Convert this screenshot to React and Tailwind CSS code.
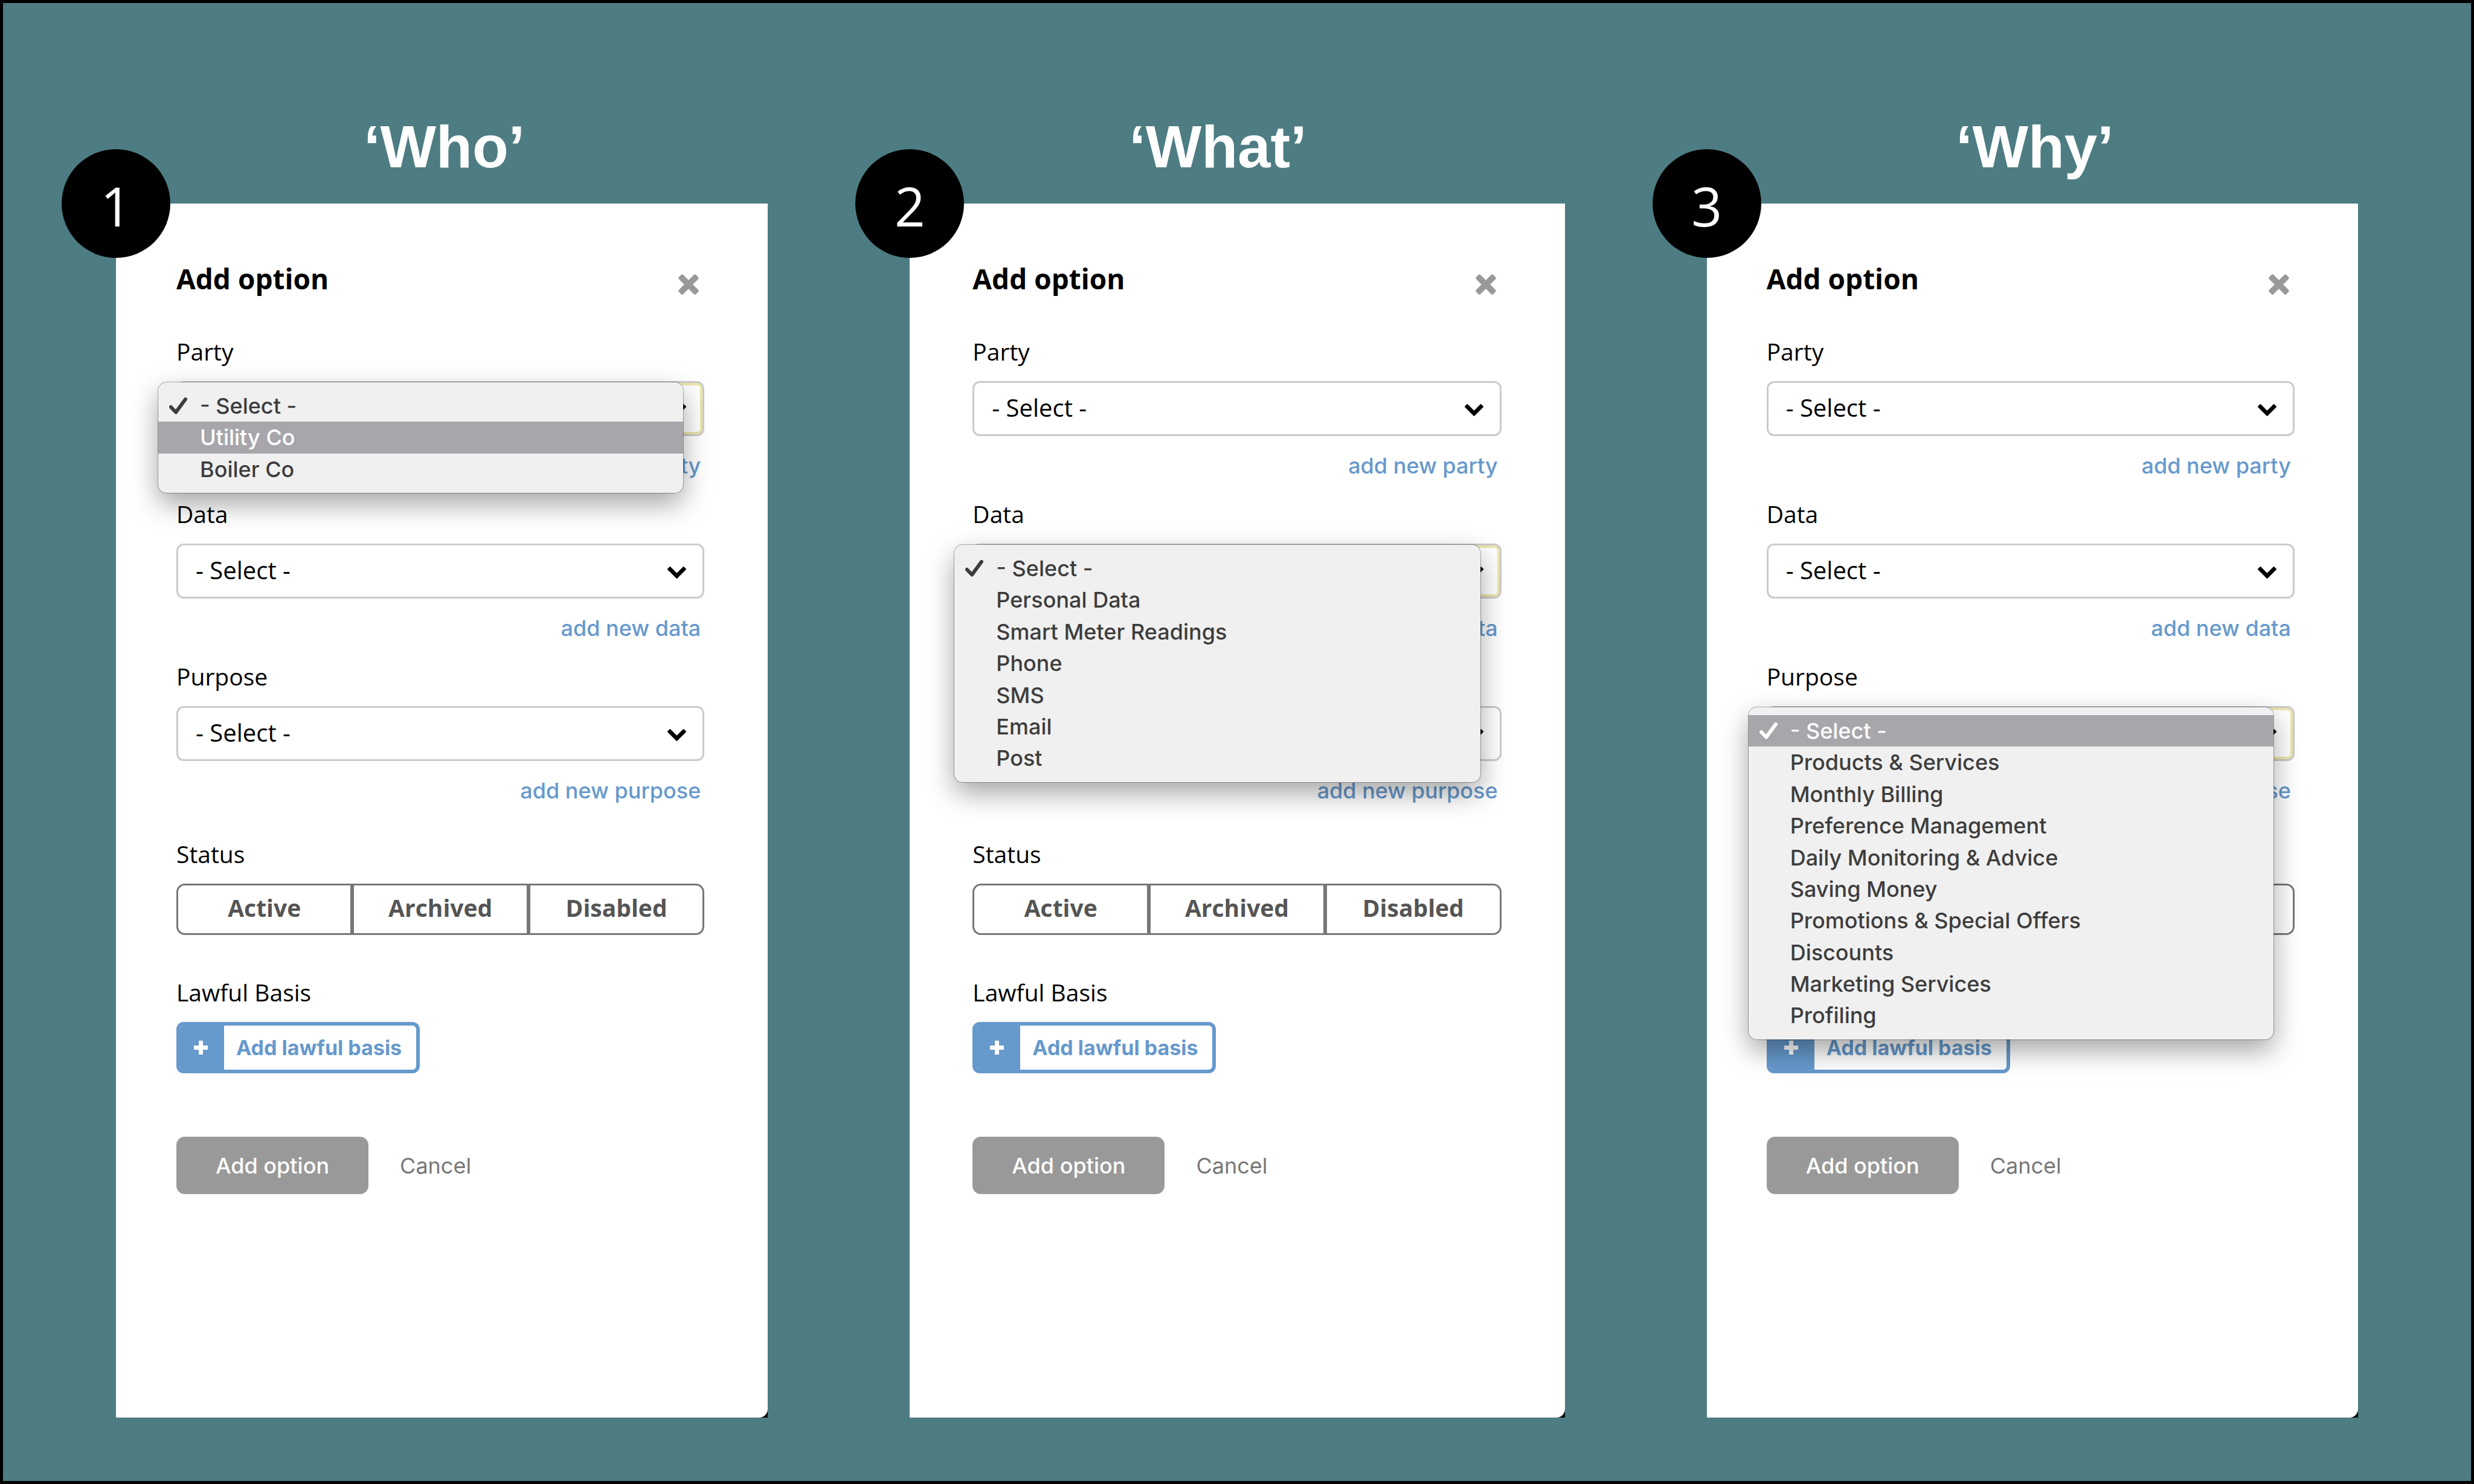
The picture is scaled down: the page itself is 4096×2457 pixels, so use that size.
import React from "react";

const PARTIES = ["- Select -", "Utility Co", "Boiler Co"];
const DATA = [
  "- Select -",
  "Personal Data",
  "Smart Meter Readings",
  "Phone",
  "SMS",
  "Email",
  "Post",
];
const PURPOSES = [
  "- Select -",
  "Products & Services",
  "Monthly Billing",
  "Preference Management",
  "Daily Monitoring & Advice",
  "Saving Money",
  "Promotions & Special Offers",
  "Discounts",
  "Marketing Services",
  "Profiling",
];

const FIELDS = [
  { name: "party", label: "Party", options: PARTIES, link: "add new party" },
  { name: "data", label: "Data", options: DATA, link: "add new data" },
  { name: "purpose", label: "Purpose", options: PURPOSES, link: "add new purpose" },
];

const STEPS = [
  { number: 1, title: "‘Who’", open: "party", highlighted: 1, titleClass: "pl-2", padClass: "pl-[100px]" },
  { number: 2, title: "‘What’", open: "data", highlighted: -1, titleClass: "pr-16", padClass: "pl-[104px]" },
  { number: 3, title: "‘Why’", open: "purpose", highlighted: 0, titleClass: "pl-2", padClass: "pl-[99px]" },
];

function CloseIcon() {
  return (
    <svg viewBox="0 0 34 34" className="size-[34px]" fill="currentColor" aria-hidden="true">
      <rect x="-3" y="12" width="40" height="10" rx="2.5" transform="rotate(45 17 17)" />
      <rect x="-3" y="12" width="40" height="10" rx="2.5" transform="rotate(-45 17 17)" />
    </svg>
  );
}

function ChevronIcon() {
  return (
    <svg
      viewBox="90 533 1612 1035"
      className="pointer-events-none absolute top-[38px] right-[30px] h-5 w-[31px]"
      fill="currentColor"
      aria-hidden="true"
    >
      <path d="M1683 808l-742 741q-19 19-45 19t-45-19l-742-741q-19-19-19-45.5t19-45.5l166-165q19-19 45-19t45 19l531 531 531-531q19-19 45-19t45 19l166 165q19 19 19 45.5t-19 45.5z" />
    </svg>
  );
}

function CheckIcon() {
  return (
    <svg viewBox="0 0 30 29" className="h-[29px] w-[30px]" fill="none" stroke="currentColor" aria-hidden="true">
      <path d="M3 16 L11.2 24.5 L27 3" strokeWidth="6" strokeLinecap="round" strokeLinejoin="round" />
    </svg>
  );
}

function PlusIcon() {
  return (
    <svg viewBox="0 0 23 23" className="size-[23px]" fill="currentColor" aria-hidden="true">
      <path d="M8 0h7v8h8v7h-8v8H8v-8H0V8h8z" />
    </svg>
  );
}

function OpenMenu({ label, options, highlighted }) {
  return (
    <ul
      role="listbox"
      aria-label={label}
      className="absolute top-0.5 right-[35px] -left-[30px] z-10 rounded-[14px] bg-[#f0f0f0] py-[13px] font-['Inter',sans-serif] text-[36px] leading-[1.455] font-medium text-[#3d3d3d] shadow-[0_0_0_1px_rgba(0,0,0,0.3),0_18px_45px_rgba(0,0,0,0.36)]"
    >
      {options.map((option, index) => (
        <li
          key={option}
          role="option"
          aria-selected={index === 0}
          className={
            index === highlighted
              ? "flex items-center bg-[#a6a6ab] text-white"
              : "flex items-center"
          }
        >
          <span className="flex w-[69px] shrink-0 pl-[18px]">{index === 0 && <CheckIcon />}</span>
          {option}
        </li>
      ))}
    </ul>
  );
}

function Field({ id, field, isOpen, highlighted }) {
  return (
    <div className="mb-[30px]">
      <label htmlFor={id} className="mb-[23px] block text-[39px] leading-[52px]">
        {field.label}
      </label>
      <div className="relative">
        <select
          id={id}
          defaultValue={field.options[0]}
          className={
            isOpen
              ? "block h-[91px] w-full appearance-none rounded-xl border-3 border-[#cbcbcb] bg-white pr-20 pb-1 pl-[29px] text-[40px] shadow-[inset_0_0_0_4px_#ede6ab]"
              : "block h-[91px] w-full appearance-none rounded-xl border-3 border-[#cbcbcb] bg-white pr-20 pb-1 pl-[29px] text-[40px]"
          }
        >
          {field.options.map((option) => (
            <option key={option}>{option}</option>
          ))}
        </select>
        <ChevronIcon />
        {isOpen && <OpenMenu label={field.label} options={field.options} highlighted={highlighted} />}
      </div>
      <div className="mt-[25px] flex justify-end pr-1.5">
        <a href="#" className="font-['Inter',sans-serif] text-[36px] leading-[48px] font-medium text-[#6699cc]">
          {field.link}
        </a>
      </div>
    </div>
  );
}

function Panel({ step }) {
  return (
    <section className="flex flex-col">
      <h2
        className={`mb-[38px] text-center font-['Liberation_Sans',Arial,sans-serif] text-[98px] leading-[112px] font-bold text-white ${step.titleClass}`}
      >
        {step.title}
      </h2>
      <div className="relative flex grow bg-black">
        <div className="absolute -top-[90px] -left-[90px] z-20 flex size-[180px] items-center justify-center rounded-full bg-black pt-1.5 text-[89px] leading-none text-white">
          {step.number}
        </div>
        <form className={`grow rounded-br-[14px] bg-white pt-[92px] pr-[105px] pb-20 ${step.padClass}`}>
          <div className="mb-[63px] flex items-start justify-between pr-[9px]">
            <h3 className="text-[46px] leading-[64px] font-bold">Add option</h3>
            <button type="button" aria-label="Close" className="mt-[25px] text-[#999999]">
              <CloseIcon />
            </button>
          </div>

          {FIELDS.map((field) => (
            <Field
              key={field.name}
              id={`${field.name}-${step.number}`}
              field={field}
              isOpen={step.open === field.name}
              highlighted={step.highlighted}
            />
          ))}

          <fieldset className="mt-[55px]">
            <legend className="mb-[23px] text-[39px] leading-[52px]">Status</legend>
            <div className="grid h-[85px] grid-cols-3 text-[39px] font-bold text-[#555555]">
              <button type="button" className="rounded-l-[14px] border-3 border-[#777777] pb-1">
                Active
              </button>
              <button type="button" className="border-3 border-[#777777] pb-1">
                Archived
              </button>
              <button type="button" className="rounded-r-[14px] border-3 border-[#777777] pb-1">
                Disabled
              </button>
            </div>
          </fieldset>

          <h4 className="mt-[69px] mb-[23px] text-[39px] leading-[52px]">Lawful Basis</h4>
          <button
            type="button"
            className="flex h-[85px] items-stretch overflow-hidden rounded-xl border-6 border-[#6699cc] bg-white font-['Inter',sans-serif] text-[34px] font-bold text-[#6699cc]"
          >
            <span className="flex w-[73px] items-center justify-center bg-[#6699cc] pr-1 text-white">
              <PlusIcon />
            </span>
            <span className="flex items-center pr-6 pl-5">Add lawful basis</span>
          </button>

          <div className="mt-[105px] flex items-center gap-[52px] font-['Inter',sans-serif] text-[36px]">
            <button type="submit" className="h-[95px] rounded-[14px] bg-[#999999] px-[65px] font-medium text-white">
              Add option
            </button>
            <button type="button" className="text-[#777777]">
              Cancel
            </button>
          </div>
        </form>
      </div>
    </section>
  );
}

export default function App() {
  return (
    <main className="grid min-h-screen grid-cols-[1079fr_1084fr_1078fr] gap-x-[235px] border-5 border-black bg-[#4d7d82] px-[187px] pt-[182px] pb-[105px] font-['Open_Sans',sans-serif] text-black">
      {STEPS.map((step) => (
        <Panel key={step.number} step={step} />
      ))}
    </main>
  );
}
